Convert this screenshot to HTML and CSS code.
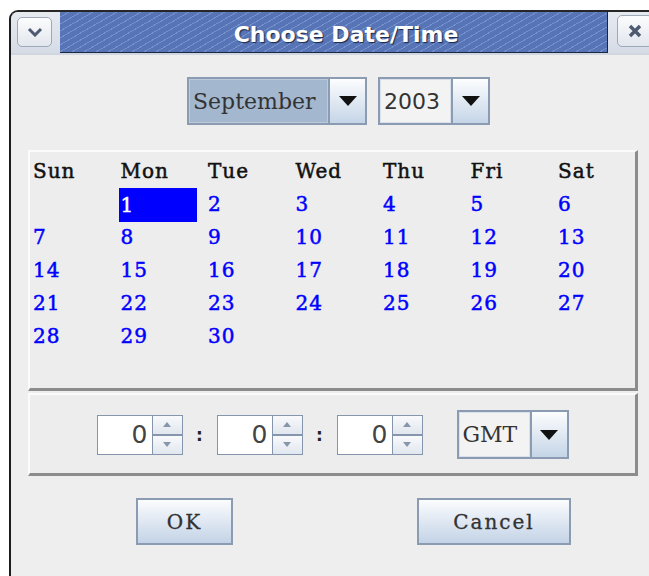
FILE: index.html
```html
<!DOCTYPE html>
<html>
<head>
<meta charset="utf-8">
<title>Choose Date/Time</title>
<link rel="stylesheet" href="styles.css">
</head>
<body>
<div class="window">
  <div class="titlebar">
    <div class="tb-btn menu">
      <svg width="16" height="10" viewBox="0 0 16 10"><polyline points="2,2 8,8 14,2" fill="none" stroke="#4d5a71" stroke-width="3"/></svg>
    </div>
    <div class="tb-title"><span>Choose Date/Time</span></div>
    <div class="tb-btn close">
      <svg width="14" height="14" viewBox="0 0 14 14"><path d="M2 2 L12 12 M12 2 L2 12" stroke="#4d5a71" stroke-width="3.4"/></svg>
    </div>
  </div>

  <div class="content">
    <div class="selectors">
      <div class="combo month">
        <div class="combo-value selected">September</div>
        <div class="combo-arrow"><svg width="18" height="10" viewBox="0 0 18 10"><polygon points="0,0 18,0 9,10" fill="#111"/></svg></div>
      </div>
      <div class="combo year">
        <div class="combo-value num">2003</div>
        <div class="combo-arrow"><svg width="18" height="10" viewBox="0 0 18 10"><polygon points="0,0 18,0 9,10" fill="#111"/></svg></div>
      </div>
    </div>

    <div class="panel calendar">
      <div class="days">
        <div class="head">Sun</div><div class="head">Mon</div><div class="head">Tue</div><div class="head">Wed</div><div class="head">Thu</div><div class="head">Fri</div><div class="head">Sat</div>
        <div class="day"></div><div class="day current">1</div><div class="day">2</div><div class="day">3</div><div class="day">4</div><div class="day">5</div><div class="day">6</div>
        <div class="day">7</div><div class="day">8</div><div class="day">9</div><div class="day">10</div><div class="day">11</div><div class="day">12</div><div class="day">13</div>
        <div class="day">14</div><div class="day">15</div><div class="day">16</div><div class="day">17</div><div class="day">18</div><div class="day">19</div><div class="day">20</div>
        <div class="day">21</div><div class="day">22</div><div class="day">23</div><div class="day">24</div><div class="day">25</div><div class="day">26</div><div class="day">27</div>
        <div class="day">28</div><div class="day">29</div><div class="day">30</div>
      </div>
    </div>

    <div class="panel time">
      <div class="spinner">
        <div class="spin-field">0</div>
        <div class="spin-buttons">
          <div class="spin-btn"><svg width="8" height="5" viewBox="0 0 8 5"><polygon points="0,5 8,5 4,0" fill="#8796ac"/></svg></div>
          <div class="spin-btn"><svg width="8" height="5" viewBox="0 0 8 5"><polygon points="0,0 8,0 4,5" fill="#8796ac"/></svg></div>
        </div>
      </div>
      <div class="sep">:</div>
      <div class="spinner">
        <div class="spin-field">0</div>
        <div class="spin-buttons">
          <div class="spin-btn"><svg width="8" height="5" viewBox="0 0 8 5"><polygon points="0,5 8,5 4,0" fill="#8796ac"/></svg></div>
          <div class="spin-btn"><svg width="8" height="5" viewBox="0 0 8 5"><polygon points="0,0 8,0 4,5" fill="#8796ac"/></svg></div>
        </div>
      </div>
      <div class="sep">:</div>
      <div class="spinner">
        <div class="spin-field">0</div>
        <div class="spin-buttons">
          <div class="spin-btn"><svg width="8" height="5" viewBox="0 0 8 5"><polygon points="0,5 8,5 4,0" fill="#8796ac"/></svg></div>
          <div class="spin-btn"><svg width="8" height="5" viewBox="0 0 8 5"><polygon points="0,0 8,0 4,5" fill="#8796ac"/></svg></div>
        </div>
      </div>
      <div class="combo zone">
        <div class="combo-value">GMT</div>
        <div class="combo-arrow"><svg width="18" height="10" viewBox="0 0 18 10"><polygon points="0,0 18,0 9,10" fill="#111"/></svg></div>
      </div>
    </div>

    <div class="actions">
      <div class="btn ok">OK</div>
      <div class="btn cancel">Cancel</div>
    </div>
  </div>
</div>
</body>
</html>
```

FILE: styles.css
```css
* { box-sizing: border-box; }

html, body {
  margin: 0;
  padding: 0;
}

body {
  width: 649px;
  height: 576px;
  overflow: hidden;
  background: #ffffff;
  font-family: "DejaVu Serif", "Liberation Serif", serif;
}

/* dialog frame */
.window {
  margin: 10px 0 0 9px;
  width: 646px;
  height: 566px;
  border-left: 2px solid #1c1c1c;
  border-top: 2px solid #262626;
  border-top-left-radius: 9px;
  background: #eeeeee;
  display: flex;
  flex-direction: column;
  overflow: hidden;
}

/* title bar */
.titlebar {
  height: 43px;
  flex: none;
  display: flex;
  align-items: flex-start;
  background: linear-gradient(#e6e9f0, #d6dce6);
  border-bottom: 2px solid #d0d6e0;
}

.tb-btn {
  width: 35px;
  height: 30px;
  margin-top: 5px;
  border: 1px solid #9ea8b8;
  border-radius: 5px;
  background: linear-gradient(#fbfcfd, #e2e6ed);
  display: flex;
  align-items: center;
  justify-content: center;
  flex: none;
}

.tb-btn.menu { margin-left: 6px; }

.tb-btn.close {
  margin-left: 9px;
  margin-top: 3px;
  width: 36px;
  height: 32px;
}

.tb-title {
  margin-left: 8px;
  width: 548px;
  height: 41px;
  flex: none;
  background:
    repeating-linear-gradient(150deg, #5674b6 0px, #5674b6 4px, #7591cc 4px, #7591cc 5px, #5674b6 5px, #5674b6 6px);
  border-right: 1px solid #1b2642;
  border-bottom: 1px solid #1b2642;
  display: flex;
  align-items: center;
  justify-content: center;
  padding: 5px 0 0 25px;
  color: #ffffff;
  font: bold 22px "DejaVu Sans", sans-serif;
  text-shadow: 1px 1px 1px #1a2644;
}

/* body */
.content {
  display: flex;
  flex-direction: column;
  padding-left: 17px;
}

.selectors {
  display: flex;
  justify-content: center;
  gap: 11px;
  margin-top: 22px;
  padding-right: 6px;
}

/* combo boxes */
.combo {
  display: flex;
  height: 48px;
  border: 2px solid #8a9bb2;
  background: #f2f2f2;
}

.combo.month { width: 180px; }
.combo.year { width: 112px; }
.combo.zone { width: 112px; height: 49px; }

.combo-value {
  flex: 1;
  display: flex;
  align-items: center;
  padding-left: 3px;
  border: 1px solid #d9e1eb;
  background: #f3f3f3;
  color: #333333;
  font: 22px "DejaVu Serif", serif;
}

.combo-value.selected {
  background: #a3b7cf;
  border-color: #bccadb;
}

.combo-value.num {
  font-family: "DejaVu Sans", sans-serif;
}

.combo-arrow {
  width: 37px;
  flex: none;
  border-left: 2px solid #8a9bb2;
  background: linear-gradient(#fcfdfe, #c5d5e7);
  display: flex;
  align-items: center;
  justify-content: center;
}

/* raised panels */
.panel {
  width: 610px;
  border-style: solid;
  border-width: 2px 3px 3px 2px;
  border-color: #fbfbfb #8c8c8c #8c8c8c #fbfbfb;
  background: #ededed;
}

.calendar {
  margin-top: 25px;
  height: 241px;
  padding: 3px 0 0 1px;
}

.days {
  display: grid;
  grid-template-columns: repeat(7, 78px);
  grid-auto-rows: 33px;
  column-gap: 9.5px;
}

.head, .day {
  font-size: 20px;
  line-height: 33px;
  letter-spacing: 1px;
  padding-left: 2px;
  white-space: nowrap;
  -webkit-text-stroke: 0.5px currentColor;
}

.head { color: #111111; }

.day { color: #0000ff; }

.day.current {
  background: #0000ff;
  color: #ffffff;
  line-height: 34px;
  height: 34px;
}

.time {
  margin-top: 2px;
  height: 83px;
  display: flex;
  align-items: center;
  justify-content: center;
  padding-top: 1px;
}

.spinner {
  display: flex;
  height: 40px;
}

.spin-field {
  width: 55px;
  border: 1px solid #8596ac;
  border-right: none;
  background: #ffffff;
  display: flex;
  align-items: center;
  justify-content: flex-end;
  padding-right: 4px;
  color: #444444;
  font: 25px "DejaVu Sans", sans-serif;
}

.spin-buttons {
  width: 31px;
  display: flex;
  flex-direction: column;
  border: 1px solid #8596ac;
}

.spin-btn {
  flex: 1;
  display: flex;
  align-items: center;
  justify-content: center;
  background: linear-gradient(#f8f9fb, #e1e7ef);
}

.spin-btn + .spin-btn { border-top: 2px solid #8596ac; }

.sep {
  width: 34px;
  text-align: center;
  font: bold 17px "DejaVu Sans", sans-serif;
  color: #222222;
}

.zone { margin-left: 34px; }

/* dialog buttons */
.actions {
  display: flex;
  margin-top: 22px;
  padding-left: 108px;
  gap: 184px;
}

.btn {
  height: 47px;
  border: 2px solid #8a9bb2;
  background: linear-gradient(#fbfcfe, #c3d3e6);
  display: flex;
  align-items: center;
  justify-content: center;
  color: #333333;
  font-size: 20px;
  letter-spacing: 2px;
  -webkit-text-stroke: 0.3px currentColor;
}

.btn.ok { width: 97px; }
.btn.cancel { width: 154px; }
```
